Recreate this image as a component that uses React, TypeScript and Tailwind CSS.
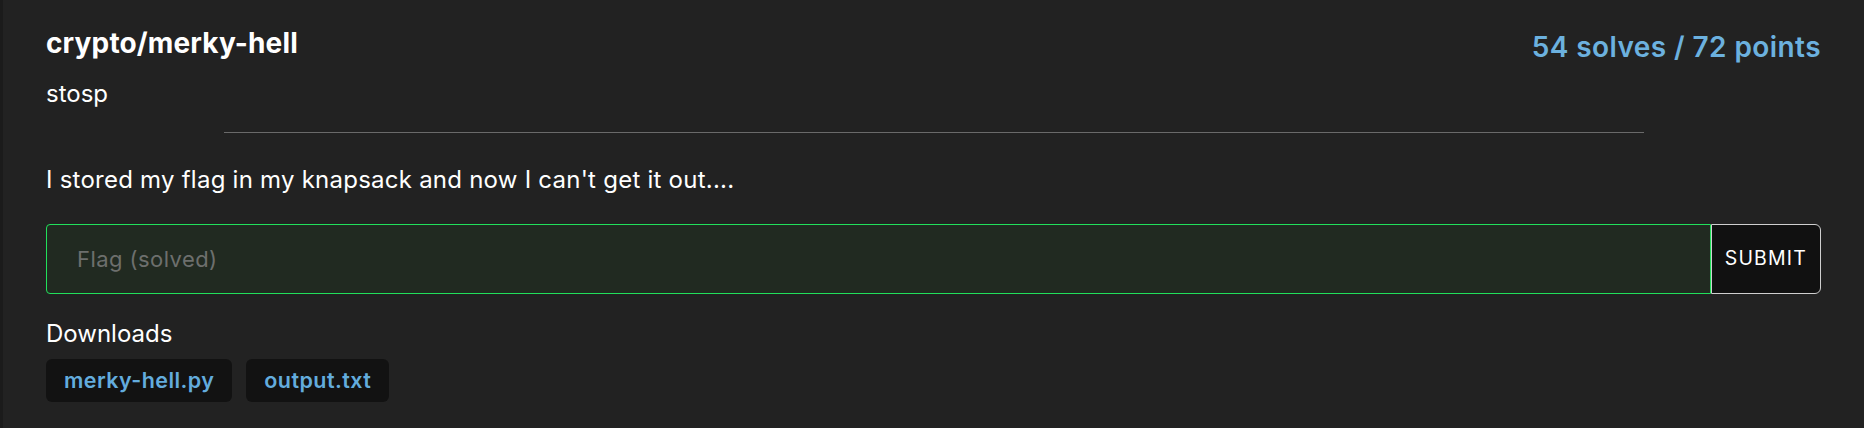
const files = ['merky-hell.py', 'output.txt'];

export default function App() {
  return (
    <div
      className="min-h-screen bg-[#222222] border-l-[3px] border-[#1b1b1b] pl-[43px] pr-[43px] text-white"
      style={{ fontFamily: 'Inter, "Noto Sans", sans-serif' }}
    >
      {/* Header */}
      <div className="flex items-start justify-between pt-[26px]">
        <div className="text-[28px] leading-[34px] font-bold tracking-[0.005em]">crypto/merky-hell</div>
        <div className="mt-[4px] text-[28px] leading-[34px] font-semibold tracking-[0.015em] text-[#6cb1df]">
          54 solves / 72 points
        </div>
      </div>
      <div className="mt-[15px] text-[24px] leading-[30px]">stosp</div>

      <div className="mx-auto mt-[23px] h-px w-4/5 bg-[#6a6a6a]" />

      <p className="mt-[32px] text-[24px] leading-[30px] tracking-[0.01em]">
        I stored my flag in my knapsack and now I can't get it out....
      </p>

      {/* Flag form */}
      <form className="mt-[29px] flex h-[70px]" onSubmit={(e) => e.preventDefault()}>
        <input
          type="text"
          placeholder="Flag (solved)"
          className="min-w-0 flex-1 rounded-l-[4px] border border-[#21e05b] bg-[#212a21] px-[30px] text-[22px] tracking-[0.02em] text-white placeholder:text-[#6d6f6d] outline-none"
        />
        <button
          type="submit"
          className="rounded-r-[6px] border border-[#cfcfcf] bg-[#111111] px-[13px] text-[19.5px] tracking-[0.06em] text-white"
        >
          SUBMIT
        </button>
      </form>

      {/* Downloads */}
      <div className="mt-[25px] text-[24px] leading-[30px]">Downloads</div>
      <div className="mt-[10px] flex gap-[14px]">
        {files.map((f) => (
          <a
            key={f}
            href="#"
            className="flex h-[43px] items-center rounded-[6px] bg-[#121212] px-[18px] text-[21.5px] font-semibold tracking-[0.02em] text-[#63acdd]"
          >
            {f}
          </a>
        ))}
      </div>
    </div>
  );
}
